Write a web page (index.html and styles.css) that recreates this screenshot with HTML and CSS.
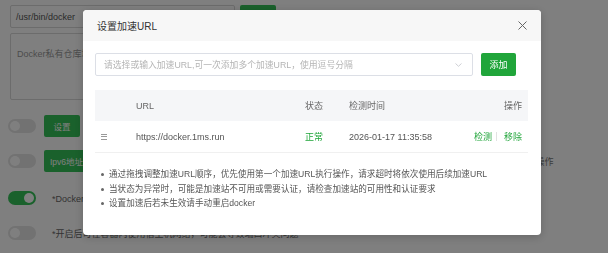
FILE: index.html
```html
<!DOCTYPE html>
<html lang="zh-CN">
<head>
<meta charset="utf-8">
<title>设置加速URL</title>
<link rel="stylesheet" href="styles.css">
</head>
<body>
<div class="page">
  <div class="row row-path">
    <div class="path-input">/usr/bin/docker</div>
    <button class="btn">保存</button>
  </div>
  <div class="textarea">Docker私有仓库地址，一行一个</div>
  <div class="row row-a">
    <span class="toggle"></span>
    <button class="btn">设置</button>
  </div>
  <div class="row row-b">
    <span class="toggle"></span>
    <button class="btn btn-wide">Ipv6地址池</button>
    <span class="muted">开启后将为容器分配IPv6地址，修改配置后需要重启Docker服务才能生效，请确认当前网络环境支持后再操作</span>
  </div>
  <div class="row row-c">
    <span class="toggle on"></span>
    <span class="label">*Docker服务</span>
  </div>
  <div class="row row-d">
    <span class="toggle"></span>
    <span class="label">*开启后可在容器内使用宿主机网络，可能会导致端口冲突问题</span>
  </div>
</div>

<div class="mask"></div>

<div class="dialog">
  <div class="dlg-head">
    <span class="dlg-title">设置加速URL</span>
    <svg class="dlg-close" width="9" height="9" viewBox="0 0 9 9"><path d="M0.5 0.5 L8.5 8.5 M8.5 0.5 L0.5 8.5" stroke="#666" stroke-width="1" fill="none"/></svg>
  </div>
  <div class="dlg-body">
    <div class="search">
      <div class="select">
        <span class="placeholder">请选择或输入加速URL,可一次添加多个加速URL，使用逗号分隔</span>
        <svg class="chev" width="7" height="4" viewBox="0 0 7 4"><path d="M0.5 0.5 L3.5 3.3 L6.5 0.5" stroke="#c8cbd0" stroke-width="0.9" fill="none"/></svg>
      </div>
      <button class="btn-add">添加</button>
    </div>
    <div class="table">
      <div class="tr thead">
        <span></span>
        <span>URL</span>
        <span>状态</span>
        <span>检测时间</span>
        <span class="ops">操作</span>
      </div>
      <div class="tr trow">
        <span class="handle"><i></i><i></i><i></i></span>
        <span>https://docker.1ms.run</span>
        <span class="ok">正常</span>
        <span>2026-01-17 11:35:58</span>
        <span class="ops"><a class="lnk">检测</a><i class="sep"></i><a class="lnk">移除</a></span>
      </div>
    </div>
    <ul class="notes">
      <li>通过拖拽调整加速URL顺序，优先使用第一个加速URL执行操作，请求超时将依次使用后续加速URL</li>
      <li>当状态为异常时，可能是加速站不可用或需要认证，请检查加速站的可用性和认证要求</li>
      <li>设置加速后若未生效请手动重启docker</li>
    </ul>
  </div>
</div>
</body>
</html>
```

FILE: styles.css
```css
* { box-sizing: border-box; }
html, body { margin: 0; padding: 0; }
body {
  width: 608px;
  height: 253px;
  overflow: hidden;
  background: #fff;
  font-family: "Liberation Sans", "Noto Sans CJK SC", sans-serif;
  color: #333;
}

/* background page */
.page {
  padding: 5px 0 0 8px;
  font-size: 9px;
  color: #666;
}
.row { display: flex; align-items: center; height: 22px; white-space: nowrap; }
.row-path { height: 23px; padding-left: 2px; gap: 5px; }
.path-input {
  width: 225px; height: 23px;
  border: 1px solid #d8d8d8; border-radius: 2px;
  padding-left: 5px; display: flex; align-items: center;
  color: #555; font-size: 9px;
}
.btn {
  height: 22px; width: 36px; border: 0; border-radius: 2px;
  background: #34c258; color: #fff; font-size: 8.5px;
  font-family: inherit; padding: 0;
}
.row-path .btn { height: 23px; }
.btn-wide { width: 70px; text-align: left; padding-left: 6px; }
.textarea {
  margin: 5px 0 0 2px; width: 330px; height: 67px;
  border: 1px solid #d8d8d8; border-radius: 2px;
  padding: 13px 6px; color: #999; font-size: 9px;
}
.row-a { margin-top: 15px; }
.row-b { margin-top: 13px; }
.row-c { margin-top: 15px; }
.row-d { margin-top: 13px; }
.toggle {
  position: relative;
  width: 28px; height: 14px; border-radius: 7px;
  background: #e4e4e4; margin-right: 8px; flex: none;
}
.toggle::after {
  content: ""; position: absolute; left: 2px; top: 2px;
  width: 10px; height: 10px; border-radius: 50%; background: #fff;
}
.toggle.on { background: #34c258; }
.toggle.on::after { left: 16px; }
.label { margin-left: 8px; color: #666; }
.muted { margin-left: 6px; color: #777; }

.mask {
  position: fixed; inset: 0;
  background: rgba(0, 0, 0, 0.5);
}

/* dialog */
.dialog {
  position: fixed; left: 83px; top: 10px;
  width: 458px; height: 225px;
  background: #fff; border-radius: 4px; overflow: hidden;
  box-shadow: 0 2px 10px rgba(0, 0, 0, 0.2);
}
.dlg-head {
  height: 31px; background: #f7f7f7;
  display: flex; align-items: center; justify-content: space-between;
  padding: 0 14px 0 14px;
}
.dlg-title { font-size: 10px; color: #333; }
.dlg-close { display: block; }
.dlg-body { padding: 12px 13px 0 12px; }
.search { display: flex; gap: 8px; width: 421px; }
.select {
  width: 378px; height: 23px;
  border: 1px solid #dcdfe6; border-radius: 2px;
  display: flex; align-items: center; justify-content: space-between;
  padding: 0 10px 0 8px;
}
.placeholder { font-size: 8.8px; color: #b4b4b4; white-space: nowrap; }
.chev { display: block; }
.btn-add {
  width: 35px; height: 23px; border: 0; border-radius: 2px;
  background: #20a53a; color: #fff; font-size: 9px;
  font-family: inherit; padding: 0;
}
.table { margin-top: 14px; }
.tr {
  display: grid;
  grid-template-columns: 41px 169px 44px 1fr auto;
  align-items: center;
  padding-right: 6px;
  font-size: 9px; white-space: nowrap;
}
.thead { height: 31px; background: #f5f6f8; color: #666; }
.trow { height: 32px; border-bottom: 1px solid #f0f0f0; color: #555; }
.ops { text-align: right; }
.handle { display: flex; flex-direction: column; gap: 1.5px; padding-left: 6px; }
.handle i { display: block; width: 6px; height: 1px; background: #999; }
.ok { color: #20a53a; }
.lnk { color: #20a53a; }
.sep { display: inline-block; width: 1px; height: 9px; background: #e2e2e2; margin: 0 7px -1px 4px; }
.notes {
  list-style: none; margin: 14px 0 0 0; padding: 0 0 0 14px;
  font-size: 8.6px; line-height: 14.5px; color: #555;
}
.notes li { position: relative; white-space: nowrap; }
.notes li::before {
  content: ""; position: absolute; left: -8px; top: 6px;
  width: 3px; height: 3px; border-radius: 50%; background: #666;
}
```
